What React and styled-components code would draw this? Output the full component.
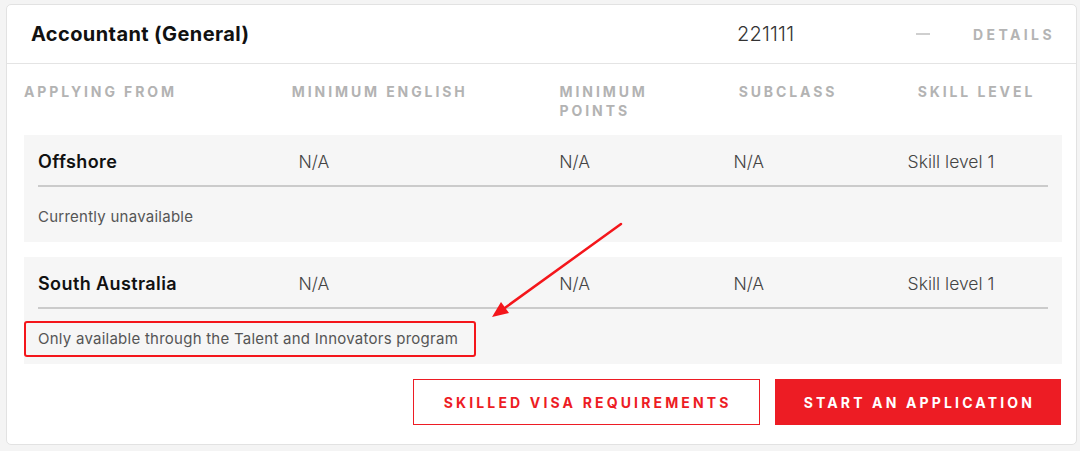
import React from "react";
import styled, { createGlobalStyle } from "styled-components";

const GlobalStyle = createGlobalStyle`
  html, body {
    margin: 0;
    padding: 0;
    background: #f4f4f4;
    font-family: Inter, "Open Sans", Arial, sans-serif;
    -webkit-font-smoothing: antialiased;
  }
  * {
    box-sizing: border-box;
  }
`;

const Page = styled.div`
  position: relative;
  width: 1080px;
  height: 451px;
  padding: 4px 3px 0 6px;
  overflow: hidden;
`;

const Card = styled.div`
  background: #ffffff;
  border: 1px solid #e2e2e2;
  border-radius: 5px;
  height: 441px;
  display: flex;
  flex-direction: column;
`;

const Header = styled.div`
  height: 59px;
  display: flex;
  align-items: center;
  padding: 0 21px 0 24px;
  border-bottom: 1px solid #e4e4e4;
`;

const Title = styled.h2`
  flex: 1;
  margin: 0;
  font-size: 20px;
  font-weight: 700;
  color: #111111;
  letter-spacing: 0.4px;
`;

const Code = styled.span`
  width: 179px;
  margin-left: -2px;
  font-size: 20px;
  font-weight: 300;
  color: #333333;
  letter-spacing: 0.2px;
`;

const Dash = styled.span`
  width: 14px;
  height: 2px;
  background: #cfcfcf;
  margin-right: 43px;
`;

const DetailsLink = styled.a`
  font-size: 14px;
  font-weight: 700;
  letter-spacing: 3.4px;
  color: #b4b4b4;
  text-decoration: none;
`;

const Body = styled.div`
  padding: 0 14px 0 17px;
`;

const Columns = styled.div`
  display: grid;
  grid-template-columns: 25.8% 25.8% 17.25% 17.25% 1fr;
`;

const HeadRow = styled(Columns)`
  padding: 18px 0 15px;
`;

const HeadCell = styled.div`
  font-size: 14px;
  line-height: 19px;
  font-weight: 700;
  letter-spacing: 2.9px;
  color: #b3b3b3;
  max-width: ${(p) => (p.narrow ? "120px" : "none")};
`;

const Entry = styled.div`
  background: #f6f6f6;
  padding: 15px 14px 7px;
  & + & {
    margin-top: 15px;
  }
`;

const MainRow = styled(Columns)`
  align-items: center;
  padding-bottom: 11px;
  border-bottom: 2px solid #cbcbcb;
`;

const Place = styled.div`
  font-size: 18px;
  line-height: 24px;
  font-weight: 600;
  letter-spacing: 0.4px;
  color: #111111;
`;

const Value = styled.div`
  font-size: 17.5px;
  line-height: 24px;
  font-weight: 300;
  color: #444444;
`;

const NoteWrap = styled.div`
  padding-top: 12px;
`;

const Note = styled.div`
  display: inline-block;
  margin-left: -14px;
  padding: 0 16px 0 12px;
  height: 36px;
  line-height: 32px;
  font-size: 15px;
  font-weight: 400;
  letter-spacing: 0.25px;
  color: #555555;
  border: 2px solid ${(p) => (p.highlight ? "#f4161b" : "transparent")};
  border-radius: 3px;
`;

const Footer = styled.div`
  display: flex;
  justify-content: flex-end;
  gap: 15px;
  padding: 15px 15px 0 0;
`;

const Button = styled.button`
  height: 46px;
  padding: ${(p) => (p.primary ? "0 25px 0 28px" : "0 27px 0 30px")};
  font-family: inherit;
  font-size: 14px;
  font-weight: 700;
  letter-spacing: 3.15px;
  color: ${(p) => (p.primary ? "#ffffff" : "#ed1c24")};
  background: ${(p) => (p.primary ? "#ed1c24" : "#ffffff")};
  border: 1px solid #ed1c24;
  cursor: pointer;
`;

const Arrow = styled.svg`
  position: absolute;
  left: 480px;
  top: 215px;
  pointer-events: none;
`;

const rows = [
  {
    place: "Offshore",
    note: "Currently unavailable",
    highlight: false,
  },
  {
    place: "South Australia",
    note: "Only available through the Talent and Innovators program",
    highlight: true,
  },
];

const App = () => (
  <>
    <GlobalStyle />
    <Page>
      <Card>
        <Header>
          <Title>Accountant (General)</Title>
          <Code>221111</Code>
          <Dash />
          <DetailsLink href="#">DETAILS</DetailsLink>
        </Header>
        <Body>
          <HeadRow>
            <HeadCell>APPLYING FROM</HeadCell>
            <HeadCell>MINIMUM ENGLISH</HeadCell>
            <HeadCell narrow>MINIMUM POINTS</HeadCell>
            <HeadCell>SUBCLASS</HeadCell>
            <HeadCell>SKILL LEVEL</HeadCell>
          </HeadRow>
          {rows.map((row) => (
            <Entry key={row.place}>
              <MainRow>
                <Place>{row.place}</Place>
                <Value>N/A</Value>
                <Value>N/A</Value>
                <Value>N/A</Value>
                <Value>Skill level 1</Value>
              </MainRow>
              <NoteWrap>
                <Note highlight={row.highlight}>{row.note}</Note>
              </NoteWrap>
            </Entry>
          ))}
        </Body>
        <Footer>
          <Button>SKILLED VISA REQUIREMENTS</Button>
          <Button primary>START AN APPLICATION</Button>
        </Footer>
      </Card>
      <Arrow width="150" height="110" viewBox="0 0 150 110">
        <line
          x1="141"
          y1="9"
          x2="22"
          y2="95"
          stroke="#f4161b"
          strokeWidth="2.5"
          strokeLinecap="round"
        />
        <polygon points="12,102 21,87 29,98" fill="#f4161b" />
      </Arrow>
    </Page>
  </>
);

export default App;
